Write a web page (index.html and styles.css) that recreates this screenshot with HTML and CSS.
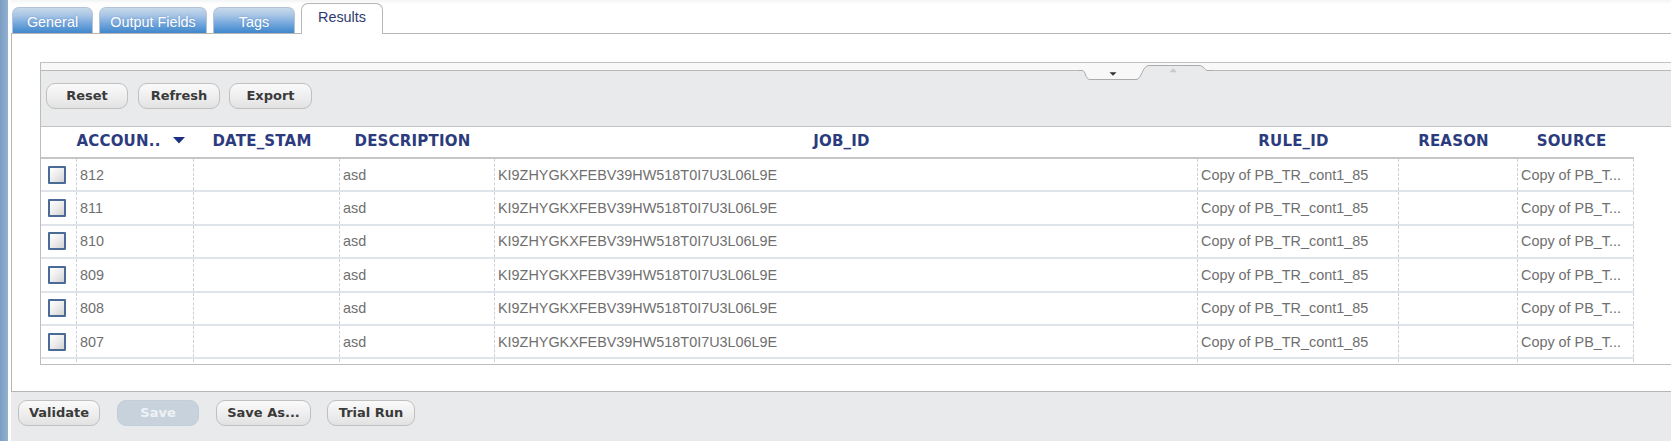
FILE: index.html
```html
<!DOCTYPE html>
<html>
<head>
<meta charset="utf-8">
<title>Results</title>
<link rel="stylesheet" href="styles.css">
</head>
<body>
<div class="app">
  <div class="stripe"></div>
  <div class="main">
    <div class="tabbar">
      <div class="tab tab-general">General</div>
      <div class="tab tab-output">Output Fields</div>
      <div class="tab tab-tags">Tags</div>
      <div class="tab tab-active">Results</div>
    </div>
    <div class="panel">
      <div class="grid">
        <div class="collapsed"></div>
        <svg class="handles" width="135" height="20" viewBox="0 0 135 20">
          <path class="h-light" d="M0,1 L0,8.5 L4,8.5 C8,8.5 7,17.5 12,17.5 L58,17.5 C64,17.5 64,3.5 71,3.5 L121,3.5 C126,3.5 126,8.5 130,8.5 L135,8.5 L135,1 Z"/>
          <path class="h-grey" d="M0,8.5 L4,8.5 C8,8.5 7,17.5 12,17.5 L58,17.5 C64,17.5 64,3.5 71,3.5 L121,3.5 C126,3.5 126,8.5 130,8.5 L135,8.5 L135,20 L0,20 Z"/>
          <path class="h-line" d="M0,8.5 L4,8.5 C8,8.5 7,17.5 12,17.5 L58,17.5 C64,17.5 64,3.5 71,3.5 L121,3.5 C126,3.5 126,8.5 130,8.5 L135,8.5"/>
          <path class="h-down" d="M31.5,10.3 L38.5,10.3 L35,13.8 Z"/>
          <path class="h-up" d="M91.5,10.3 L99,10.3 L95.25,6.5 Z"/>
        </svg>
        <div class="toolbar">
          <button class="btn btn-reset">Reset</button>
          <button class="btn btn-refresh">Refresh</button>
          <button class="btn btn-export">Export</button>
        </div>
        <div class="row head">
          <div class="hc"></div>
          <div class="hc">ACCOUN..<svg class="sort" width="12" height="7" viewBox="0 0 12 7"><path d="M0,0 L12,0 L6,6.5 Z"/></svg></div>
          <div class="hc">DATE_STAM</div>
          <div class="hc">DESCRIPTION</div>
          <div class="hc">JOB_ID</div>
          <div class="hc">RULE_ID</div>
          <div class="hc">REASON</div>
          <div class="hc">SOURCE</div>
        </div>
        <div class="rows">
          <div class="row item">
            <div class="c c-check"><span class="check"></span></div>
            <div class="c">812</div><div class="c"></div><div class="c">asd</div>
            <div class="c">KI9ZHYGKXFEBV39HW518T0I7U3L06L9E</div>
            <div class="c">Copy of PB_TR_cont1_85</div><div class="c"></div>
            <div class="c c-last">Copy of PB_T...</div>
          </div>
          <div class="row item">
            <div class="c c-check"><span class="check"></span></div>
            <div class="c">811</div><div class="c"></div><div class="c">asd</div>
            <div class="c">KI9ZHYGKXFEBV39HW518T0I7U3L06L9E</div>
            <div class="c">Copy of PB_TR_cont1_85</div><div class="c"></div>
            <div class="c c-last">Copy of PB_T...</div>
          </div>
          <div class="row item">
            <div class="c c-check"><span class="check"></span></div>
            <div class="c">810</div><div class="c"></div><div class="c">asd</div>
            <div class="c">KI9ZHYGKXFEBV39HW518T0I7U3L06L9E</div>
            <div class="c">Copy of PB_TR_cont1_85</div><div class="c"></div>
            <div class="c c-last">Copy of PB_T...</div>
          </div>
          <div class="row item">
            <div class="c c-check"><span class="check"></span></div>
            <div class="c">809</div><div class="c"></div><div class="c">asd</div>
            <div class="c">KI9ZHYGKXFEBV39HW518T0I7U3L06L9E</div>
            <div class="c">Copy of PB_TR_cont1_85</div><div class="c"></div>
            <div class="c c-last">Copy of PB_T...</div>
          </div>
          <div class="row item">
            <div class="c c-check"><span class="check"></span></div>
            <div class="c">808</div><div class="c"></div><div class="c">asd</div>
            <div class="c">KI9ZHYGKXFEBV39HW518T0I7U3L06L9E</div>
            <div class="c">Copy of PB_TR_cont1_85</div><div class="c"></div>
            <div class="c c-last">Copy of PB_T...</div>
          </div>
          <div class="row item">
            <div class="c c-check"><span class="check"></span></div>
            <div class="c">807</div><div class="c"></div><div class="c">asd</div>
            <div class="c">KI9ZHYGKXFEBV39HW518T0I7U3L06L9E</div>
            <div class="c">Copy of PB_TR_cont1_85</div><div class="c"></div>
            <div class="c c-last">Copy of PB_T...</div>
          </div>
          <div class="row item">
            <div class="c c-check"></div>
            <div class="c"></div><div class="c"></div><div class="c"></div>
            <div class="c"></div>
            <div class="c"></div><div class="c"></div>
            <div class="c c-last"></div>
          </div>
        </div>
      </div>
    </div>
    <div class="footer">
      <button class="btn btn-validate">Validate</button>
      <button class="btn btn-save" disabled>Save</button>
      <button class="btn btn-saveas">Save As...</button>
      <button class="btn btn-trial">Trial Run</button>
    </div>
  </div>
</div>
</body>
</html>
```

FILE: styles.css
```css
* { box-sizing: border-box; }
html, body { margin: 0; padding: 0; }
body {
  width: 1671px;
  height: 441px;
  overflow: hidden;
  background: #ffffff;
  font-family: "Liberation Sans", Arial, sans-serif;
}
.app { display: flex; height: 441px; }
.stripe {
  flex: none;
  width: 8px;
  background: linear-gradient(to right, #7b9ec3, #92b1d1);
}
.main {
  flex: 1;
  min-width: 0;
  margin-left: 3px;
  display: flex;
  flex-direction: column;
}

/* tabs */
.tabbar {
  flex: none;
  height: 34px;
  display: flex;
  align-items: flex-end;
  gap: 6px;
  padding-left: 1px;
  border-bottom: 1px solid #b6b6b6;
  background: linear-gradient(#f3f4f5 0, #ffffff 4px);
}
.tab {
  height: 26px;
  line-height: 26px;
  padding-top: 1px;
  text-align: center;
  font-size: 14.4px;
  color: #ffffff;
  text-shadow: 0 0 2px rgba(40, 90, 150, 0.35);
  border: 1px solid #b3c3d3;
  border-bottom: none;
  border-radius: 7px 7px 0 0;
  background: linear-gradient(#c7d9ec 0%, #a7c5e4 30%, #80ade0 55%, #5d9ad6 78%, #3f87cb 100%);
}
.tab-general { width: 81px; }
.tab-output { width: 108px; }
.tab-tags { width: 82px; }
.tab-active {
  width: 82px;
  height: 31px;
  padding-top: 0;
  margin-bottom: -1px;
  background: #ffffff;
  color: #2e3a6e;
  text-shadow: none;
  border-color: #b6b6b6;
}

/* panel */
.panel {
  flex: none;
  height: 358px;
  padding: 28px 0 26px 28px;
  border-left: 1px solid #b6b6b6;
  border-bottom: 1px solid #b6b6b6;
  background: #ffffff;
}
.grid {
  position: relative;
  height: 303px;
  border-top: 1px solid #c2c2c2;
  border-left: 1px solid #bdbdbd;
  border-bottom: 1px solid #bdbdbd;
  display: flex;
  flex-direction: column;
}
.collapsed {
  flex: none;
  height: 8px;
  background: #f8f8f8;
  border-bottom: 1px solid #b9b9b9;
}
.handles {
  position: absolute;
  left: 1037px;
  top: -1px;
}
.h-light { fill: #f8f8f8; }
.h-grey { fill: #e9eaec; }
.h-line { fill: none; stroke: #acacac; stroke-width: 1; }
.h-down { fill: #333333; }
.h-up { fill: #c6c8cb; }

.toolbar {
  flex: none;
  height: 56px;
  display: flex;
  align-items: flex-start;
  gap: 10px;
  padding: 12px 0 0 5px;
  background: #e9eaec;
  border-bottom: 1px solid #c3c3c3;
}

/* buttons */
.btn {
  height: 26px;
  padding: 0;
  border: 1px solid #c0c0c0;
  border-radius: 9px;
  background: linear-gradient(#fafafa 0%, #f0f0f0 45%, #e2e2e2 100%);
  font-family: "DejaVu Sans", Verdana, sans-serif;
  font-weight: bold;
  font-size: 13px;
  color: #3a3a3a;
  line-height: 24px;
  text-align: center;
}
.btn-reset { width: 82px; }
.btn-refresh { width: 82px; }
.btn-export { width: 83px; margin-left: -1px; }
.btn-validate { width: 82px; }
.btn-save {
  width: 82px;
  background: #c8d2dc;
  border-color: #c4ced8;
  color: #eef2f6;
}
.btn-saveas { width: 95px; }
.btn-trial { width: 88px; margin-left: -1px; }

/* table */
.row {
  display: grid;
  grid-template-columns: 35px 117px 146px 155px 703px 201px 119px 117px;
  width: 1593px;
}
.head {
  flex: none;
  height: 32px;
  border-bottom: 2px solid #c6c6c6;
}
.hc {
  padding: 4px 8px 0 0;
  line-height: 20px;
  text-align: center;
  white-space: nowrap;
  font-family: "DejaVu Sans", Verdana, sans-serif;
  font-weight: bold;
  font-size: 15px;
  letter-spacing: 0.2px;
  color: #2b3b7e;
}
.sort {
  margin-left: 12px;
  vertical-align: 2px;
}
.sort path { fill: #1c2f86; }

.rows {
  flex: none;
  height: 205px;
  overflow: hidden;
}
.item {
  height: 33.4px;
  border-bottom: 2px solid #dfe3ea;
}
.c {
  display: flex;
  align-items: center;
  padding-left: 3px;
  border-left: 1px dashed #c9d1dd;
  font-size: 14.4px;
  color: #6f6f6f;
  white-space: nowrap;
  overflow: hidden;
}
.c-check {
  border-left: none;
  padding-left: 7px;
}
.c-last { border-right: 1px dashed #c9d1dd; }
.check {
  width: 18px;
  height: 18px;
  border: 2px solid #4a6b95;
  border-radius: 1px;
  background: linear-gradient(135deg, #ffffff 0%, #ececec 50%, #d2d2d2 100%);
}

/* footer */
.footer {
  flex: 1;
  display: flex;
  align-items: flex-start;
  gap: 17px;
  padding: 8px 0 0 7px;
  background: #e9eaec;
}
```
